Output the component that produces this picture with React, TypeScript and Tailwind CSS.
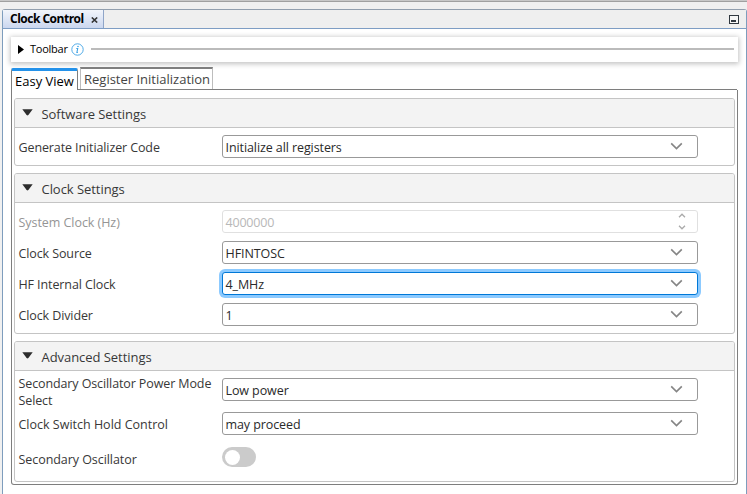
import type { ReactNode } from "react";

function Chevron() {
  return (
    <svg className="mr-[14px] mb-px h-[8px] w-[13px] shrink-0" viewBox="0 0 13 8" fill="none" stroke="#858585" strokeWidth="1.6">
      <path d="M1.2 1.4 6.5 6.6 11.8 1.4" />
    </svg>
  );
}

function Select({ children, focused = false }: { children: ReactNode; focused?: boolean }) {
  return (
    <div
      className={
        "flex h-[23px] w-[476px] shrink-0 items-center justify-between rounded-[3px] border bg-white pl-[2.5px] " +
        (focused ? "border-[#0078d7] shadow-[0_0_0_3px_#8ccaff]" : "border-[#999999]")
      }
    >
      <span className="translate-y-px whitespace-nowrap leading-[21px] tracking-[-0.09px] text-[#2a2a2a]">{children}</span>
      <Chevron />
    </div>
  );
}

function Row({ label, tracking = "tracking-[-0.11px]", children, className = "" }: { label: ReactNode; tracking?: string; children: ReactNode; className?: string }) {
  return (
    <div className={"flex h-[23px] items-center " + className}>
      <div className={"w-[204px] shrink-0 translate-y-px whitespace-nowrap pl-[0.5px] leading-[17px] " + tracking}>{label}</div>
      {children}
    </div>
  );
}

function Section({ title, className, children }: { title: string; className: string; children: ReactNode }) {
  return (
    <section className={"overflow-hidden rounded-[3px] border border-[#c4c4c4] bg-white " + className}>
      <header className="flex h-[29px] items-center border-b border-[#c4c4c4] bg-[#f3f3f3] pl-[6.5px]">
        <svg className="mb-[2px] h-[7px] w-[11px]" viewBox="0 0 11 7" fill="#2d2d2d">
          <path d="M.3.2h10.4L6.4 6.1q-.9.9-1.8 0z" />
        </svg>
        <span className="ml-[9px] translate-y-[2px] whitespace-nowrap text-[13px] tracking-[-0.05px] text-[#383838]">{title}</span>
      </header>
      <div className="pl-[3px]">{children}</div>
    </section>
  );
}

export default function App() {
  return (
    <div className="h-[494px] w-[747px] overflow-hidden border-t border-[#c8c8c8] bg-[#f0f0f0] font-['Open_Sans','Noto_Sans',sans-serif] text-[12.5px] text-[#383838]">
      <div className="h-px bg-[#a0a0a0]" />
      <div className="ml-[2px] mt-[7px] flex h-[485px] w-[745px] flex-col rounded-t-[3px] border border-b-0 border-[#7e9dbd] border-t-[#929fae] bg-white">
        <div className="flex h-[19px] shrink-0 items-center justify-between border-b border-[#7e9dc4] bg-[#efefef]">
          <div className="flex h-[18px] w-[101px] items-center border-r border-[#8fa5c8] bg-linear-to-b from-[#f2f5fb] to-[#cbd7ef] pl-[7px]">
            <span className="whitespace-nowrap text-[12px] font-bold tracking-[-0.5px] text-black">Clock Control</span>
            <svg className="ml-auto mr-[5px] mt-[2px] h-[6px] w-[7px]" viewBox="0 0 7 6" fill="none" stroke="#333" strokeWidth="1.6">
              <path d="M.8.5 6.2 5.5M6.2.5.8 5.5" />
            </svg>
          </div>
          <div className="mr-[7px] flex h-[9px] w-[10px] items-end border border-[#303840] bg-[#f5f5f5] p-px">
            <div className="h-[2px] w-[5px] bg-[#303840]" />
          </div>
        </div>

        <div className="ml-[8px] mt-[8px] flex h-[25px] w-[727px] shrink-0 items-center bg-white pl-[7px] shadow-[0_1px_5px_1px_rgba(0,0,0,0.24)]">
          <svg className="mb-px h-[9px] w-[6px]" viewBox="0 0 6 9">
            <path d="M0 0 6 4.5 0 9z" />
          </svg>
          <span className="ml-[6px] text-[11px] tracking-[-0.25px] text-black">Toolbar</span>
          <svg className="ml-[3px] h-[13px] w-[13px]" viewBox="0 0 13 13" fill="none" stroke="#3da2e4">
            <circle cx="6.5" cy="6.5" r="5.7" strokeWidth=".9" />
            <path d="M5.3 5.5h1.4L5.9 9.5h1" strokeWidth="1.1" />
            <circle cx="7" cy="3.6" r=".75" fill="#2095e5" stroke="none" />
          </svg>
          <div className="mb-px ml-[7px] mr-[4px] h-[2px] flex-1 bg-[#bbbbbb]" />
        </div>

        <div className="relative z-10 ml-[8px] mt-[5px] flex h-[23px] shrink-0 items-start">
          <div className="mt-px h-[22px] w-[67px] rounded-t-[2px] border-x border-t-[3px] border-x-[#7e7e7e] border-t-[#2492ea] bg-white pl-[3px]">
            <span className="block whitespace-nowrap text-[13px] leading-[21px] text-black">Easy View</span>
          </div>
          <div className="ml-[2px] h-[22px] w-[133px] border-x border-t-2 border-x-[#bdbdbd] border-t-[#7e7e7e] bg-white pl-[3px]">
            <span className="block whitespace-nowrap text-[13px] leading-[21px] text-[#444]">Register Initialization</span>
          </div>
        </div>

        <div className="ml-[8px] flex h-[395px] w-[727px] shrink-0 flex-col rounded-b-[3px] border border-t-0 border-[#7e7e7e] bg-white px-[2px]">
          <div className="-mr-[2px] -mt-px ml-[64px] h-px shrink-0 bg-[#7e7e7e]" />
          <Section title="Software Settings" className="mt-[8px] h-[68px] shrink-0">
            <Row label="Generate Initializer Code" className="mt-[7px]">
              <Select>Initialize all registers</Select>
            </Row>
          </Section>
          <Section title="Clock Settings" className="mt-[7px] h-[161px] shrink-0">
            <Row label={<span className="text-[#959595]">System Clock (Hz)</span>} tracking="tracking-[-0.05px]" className="mt-[7px]">
              <div className="flex h-[23px] w-[476px] items-center justify-between rounded-[3px] border border-[#e0e0e0] pl-[2.5px]">
                <span className="translate-y-px leading-[21px] tracking-[-0.2px] text-[#b8b8b8]">4000000</span>
                <svg className="mr-[11px] h-[17px] w-[8px]" viewBox="0 0 8 17" fill="none" stroke="#aaa" strokeWidth="1.3">
                  <path d="M1 4.2 4 1.2 7 4.2M1 12.8 4 15.8 7 12.8" />
                </svg>
              </div>
            </Row>
            <Row label="Clock Source" className="mt-[8px]">
              <Select>HFINTOSC</Select>
            </Row>
            <Row label="HF Internal Clock" tracking="tracking-[-0.1px]" className="mt-[8px]">
              <Select focused>4_MHz</Select>
            </Row>
            <Row label="Clock Divider" className="mt-[8px]">
              <Select>1</Select>
            </Row>
          </Section>
          <Section title="Advanced Settings" className="mt-[7px] h-[141px] shrink-0">
            <Row label={<span className="block translate-y-px">Secondary Oscillator Power Mode<br />Select</span>} className="mt-[7px]">
              <Select>Low power</Select>
            </Row>
            <Row label="Clock Switch Hold Control" tracking="tracking-normal" className="mt-[11px]">
              <Select>may proceed</Select>
            </Row>
            <Row label="Secondary Oscillator" tracking="tracking-[-0.06px]" className="mt-[12px]">
              <div className="-mt-[3px] flex h-[20px] w-[34px] items-center rounded-full bg-[#cbcbcb] pl-[3px]">
                <div className="h-[15px] w-[15px] rounded-full bg-white" />
              </div>
            </Row>
          </Section>
        </div>
      </div>
    </div>
  );
}
